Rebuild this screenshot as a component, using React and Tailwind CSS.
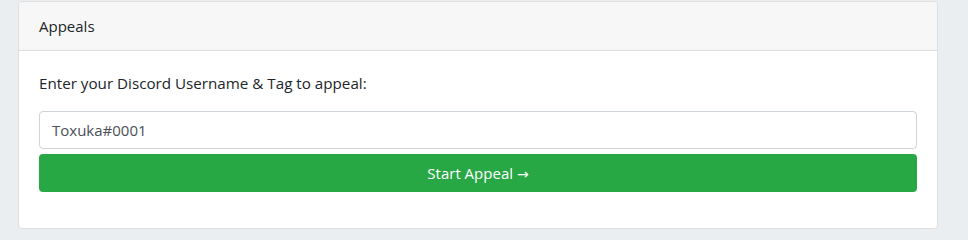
export default function App() {
  return (
    <div
      className="min-h-screen bg-[#eaeef0] pt-px px-[18px] text-[#212529]"
      style={{ fontFamily: '"Segoe UI", "Open Sans", "Liberation Sans", sans-serif' }}
    >
      {/* appeal card */}
      <div className="w-[920px] bg-white border border-[#dfdfdf] rounded-[4px]">
        <div className="bg-[#f7f7f7] border-b border-[#dfdfdf] px-5 py-3 text-[15px] leading-6 rounded-t-[4px]">
          Appeals
        </div>
        <div className="p-5">
          <form className="mb-4" onSubmit={(e) => e.preventDefault()}>
            <p className="text-[15.2px] leading-6 mb-4">
              Enter your Discord Username &amp; Tag to appeal:
            </p>
            <input
              type="text"
              defaultValue="Toxuka#0001"
              className="block w-full h-[38px] px-3 text-[15px] text-[#495057] border border-[#ced4da] rounded-[4px] outline-none"
            />
            <button
              type="submit"
              className="mt-[5px] block w-full h-[38px] bg-[#28a745] text-white text-[15px] rounded-[4px]"
            >
              Start Appeal{" "}
              <span className="font-['DejaVu_Sans',sans-serif] text-[14px]">→</span>
            </button>
          </form>
        </div>
      </div>
    </div>
  );
}
